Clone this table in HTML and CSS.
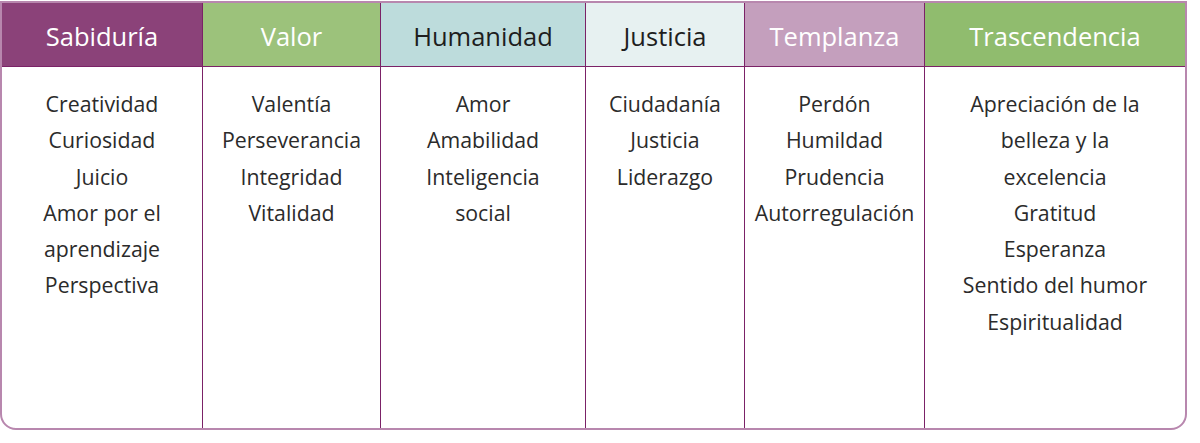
FILE: index.html
```html
<!DOCTYPE html>
<html lang="es">
<head>
<meta charset="utf-8">
<link rel="stylesheet" href="styles.css">
</head>
<body>
<div class="table">
  <div class="col">
    <div class="head h-sab">Sabiduría</div>
    <div class="body">
      <div>Creatividad</div><div>Curiosidad</div><div>Juicio</div><div>Amor por el</div><div>aprendizaje</div><div>Perspectiva</div>
    </div>
  </div>
  <div class="col">
    <div class="head h-val">Valor</div>
    <div class="body">
      <div>Valentía</div><div>Perseverancia</div><div>Integridad</div><div>Vitalidad</div>
    </div>
  </div>
  <div class="col">
    <div class="head h-hum">Humanidad</div>
    <div class="body">
      <div>Amor</div><div>Amabilidad</div><div>Inteligencia</div><div>social</div>
    </div>
  </div>
  <div class="col">
    <div class="head h-jus">Justicia</div>
    <div class="body">
      <div>Ciudadanía</div><div>Justicia</div><div>Liderazgo</div>
    </div>
  </div>
  <div class="col">
    <div class="head h-tem">Templanza</div>
    <div class="body">
      <div>Perdón</div><div>Humildad</div><div>Prudencia</div><div>Autorregulación</div>
    </div>
  </div>
  <div class="col">
    <div class="head h-tra">Trascendencia</div>
    <div class="body">
      <div>Apreciación de la</div><div>belleza y la</div><div>excelencia</div><div>Gratitud</div><div>Esperanza</div><div>Sentido del humor</div><div>Espiritualidad</div>
    </div>
  </div>
</div>
</body>
</html>
```

FILE: styles.css
```css
html, body {
  margin: 0;
  padding: 0;
  background: #ffffff;
}
body {
  padding-top: 1px;
  font-family: "Open Sans", "Noto Sans", sans-serif;
}
.table {
  width: 1187px;
  height: 429px;
  box-sizing: border-box;
  border: 2px solid #b887ae;
  border-radius: 0 0 16px 16px;
  display: grid;
  grid-template-columns: 200px 178px 205px 159px 180px 261px;
  overflow: hidden;
}
.col {
  display: flex;
  flex-direction: column;
  min-width: 0;
}
.col + .col {
  border-left: 1px solid #7b2267;
}
.head {
  height: 61px;
  padding-top: 2px;
  border-bottom: 1px solid #7b2267;
  display: flex;
  align-items: center;
  justify-content: center;
  font-size: 25.5px;
  color: #ffffff;
  white-space: nowrap;
}
.h-sab { background: #8b4279; }
.h-val { background: #9cc27b; }
.h-hum { background: #bddcdc; color: #1e1e1e; }
.h-jus { background: #e7f1f1; color: #1e1e1e; }
.h-tem { background: #c49fbd; }
.h-tra { background: #90bc6e; }
.body {
  flex: 1;
  padding-top: 19px;
  text-align: center;
  font-size: 21.3px;
  line-height: 36.3px;
  color: #2b2b2b;
  white-space: nowrap;
}
```
